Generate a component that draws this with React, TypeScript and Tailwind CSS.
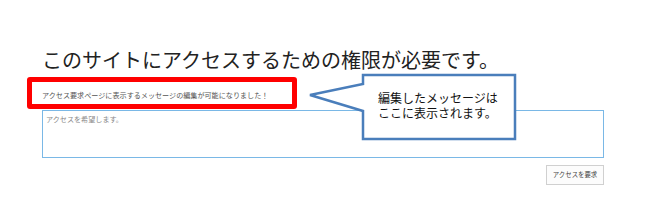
import React from 'react'

const JP = "font-['Noto_Sans_CJK_JP','Noto_Sans',sans-serif]"

export default function App() {
  return (
    <div className={`relative w-[648px] h-[215px] overflow-hidden bg-white ${JP}`}>
      <div className="pl-[42px] pr-[44px] pt-[46px]">
        <h1 className="text-[20px] leading-[28px] text-[#222] whitespace-nowrap">
          このサイトにアクセスするための権限が必要です。
        </h1>
        <div className="mt-[16px] text-[7.1px] leading-[10px] text-[#555] whitespace-nowrap">
          アクセス要求ページに表示するメッセージの編集が可能になりました！
        </div>
        <div className="mt-[10px] h-[48px] border border-[#7ab8e6] px-[3px] pt-[3px] text-[7.1px] leading-[10px] text-[#888]">
          アクセスを希望します。
        </div>
        <div className="mt-[7px] flex justify-end">
          <button className="h-[20px] w-[58px] border border-[#d0d0d0] bg-[#fcfcfc] text-[6.4px] text-[#444]">
            アクセスを要求
          </button>
        </div>
      </div>

      {/* red highlight round the message */}
      <div className="absolute left-[27px] top-[77px] w-[270px] h-[32px] rounded-[3px] border-[5px] border-[#ff0000]" />

      {/* callout */}
      <svg className="absolute inset-0 pointer-events-none" width={648} height={215}>
        <path
          d="M363,75 L515,75 L515,139 L363,139 L363,111 L310,95 L363,84 Z"
          fill="#ffffff"
          stroke="#4a7ebb"
          strokeWidth={2.5}
          strokeLinejoin="miter"
        />
      </svg>
      <div className="absolute left-[378px] top-[90px] text-[12px] leading-[15px] text-[#111]">
        <div>編集したメッセージは</div>
        <div>ここに表示されます。</div>
      </div>
    </div>
  )
}
